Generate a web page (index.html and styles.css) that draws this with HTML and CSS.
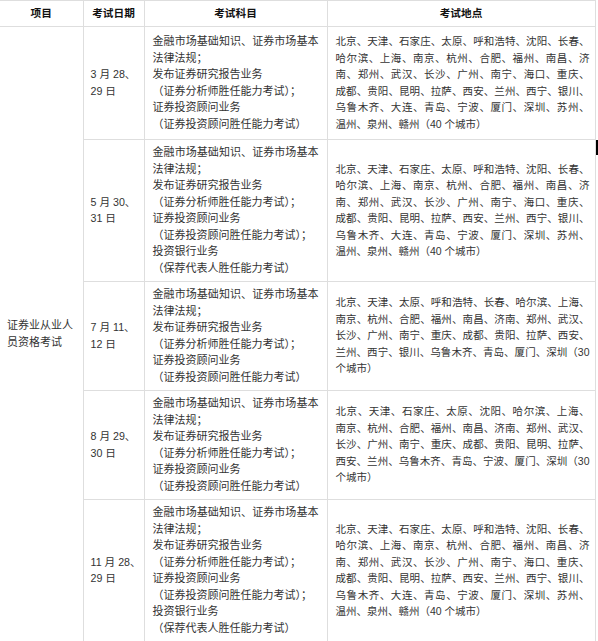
FILE: index.html
```html
<!DOCTYPE html>
<html lang="zh-CN">
<head>
<meta charset="utf-8">
<title>证券业从业人员资格考试</title>
<link rel="stylesheet" href="styles.css">
</head>
<body>
<table class="exam">
  <colgroup>
    <col class="c-item">
    <col class="c-date">
    <col class="c-subj">
    <col class="c-place">
  </colgroup>
  <thead>
    <tr>
      <th>项目</th>
      <th>考试日期</th>
      <th>考试科目</th>
      <th>考试地点</th>
    </tr>
  </thead>
  <tbody>
    <tr class="first">
      <td class="item" rowspan="5">证券业从业人员资格考试</td>
      <td class="date">3 月 28、29 日</td>
      <td class="subj">金融市场基础知识、证券市场基本法律法规；<br>发布证券研究报告业务<br>（证券分析师胜任能力考试）；<br>证券投资顾问业务<br>（证券投资顾问胜任能力考试）</td>
      <td class="place">北京、天津、石家庄、太原、呼和浩特、沈阳、长春、哈尔滨、上海、南京、杭州、合肥、福州、南昌、济南、郑州、武汉、长沙、广州、南宁、海口、重庆、成&#8288;都、贵阳、昆明、拉萨、西安、兰州、西宁、银川、乌鲁木齐、大连、青岛、宁波、厦门、深圳、苏州、温&#8288;州、泉州、赣州（40 个城市）</td>
    </tr>
    <tr>
      <td class="date">5 月 30、31 日</td>
      <td class="subj">金融市场基础知识、证券市场基本法律法规；<br>发布证券研究报告业务<br>（证券分析师胜任能力考试）；<br>证券投资顾问业务<br>（证券投资顾问胜任能力考试）；<br>投资银行业务<br>（保荐代表人胜任能力考试）</td>
      <td class="place">北京、天津、石家庄、太原、呼和浩特、沈阳、长春、哈尔滨、上海、南京、杭州、合肥、福州、南昌、济南、郑州、武汉、长沙、广州、南宁、海口、重庆、成&#8288;都、贵阳、昆明、拉萨、西安、兰州、西宁、银川、乌鲁木齐、大连、青岛、宁波、厦门、深圳、苏州、温&#8288;州、泉州、赣州（40 个城市）</td>
    </tr>
    <tr>
      <td class="date">7 月 11、12 日</td>
      <td class="subj">金融市场基础知识、证券市场基本法律法规；<br>发布证券研究报告业务<br>（证券分析师胜任能力考试）；<br>证券投资顾问业务<br>（证券投资顾问胜任能力考试）</td>
      <td class="place">北京、天津、太原、呼和浩特、长春、哈尔滨、上海、南京、杭州、合肥、福州、南昌、济南、郑州、武汉、长沙、广州、南宁、重庆、成都、贵阳、拉萨、西安、兰州、西宁、银川、乌鲁木齐、青岛、厦门、深圳（30 个城市）</td>
    </tr>
    <tr>
      <td class="date">8 月 29、30 日</td>
      <td class="subj">金融市场基础知识、证券市场基本法律法规；<br>发布证券研究报告业务<br>（证券分析师胜任能力考试）；<br>证券投资顾问业务<br>（证券投资顾问胜任能力考试）</td>
      <td class="place">北京、天津、石家庄、太原、沈阳、哈尔滨、上海、南&#8288;京、杭州、合肥、福州、南昌、济南、郑州、武汉、长沙、广州、南宁、重庆、成都、贵阳、昆明、拉萨、西安、兰州、乌鲁木齐、青岛、宁波、厦门、深圳（30 个城市）</td>
    </tr>
    <tr>
      <td class="date">11 月 28、29 日</td>
      <td class="subj">金融市场基础知识、证券市场基本法律法规；<br>发布证券研究报告业务<br>（证券分析师胜任能力考试）；<br>证券投资顾问业务<br>（证券投资顾问胜任能力考试）；<br>投资银行业务<br>（保荐代表人胜任能力考试）</td>
      <td class="place">北京、天津、石家庄、太原、呼和浩特、沈阳、长春、哈尔滨、上海、南京、杭州、合肥、福州、南昌、济南、郑州、武汉、长沙、广州、南宁、海口、重庆、成&#8288;都、贵阳、昆明、拉萨、西安、兰州、西宁、银川、乌鲁木齐、大连、青岛、宁波、厦门、深圳、苏州、温&#8288;州、泉州、赣州（40 个城市）</td>
    </tr>
  </tbody>
</table>
<div class="caret"></div>
</body>
</html>
```
FILE: styles.css
```css
html, body {
  margin: 0;
  padding: 0;
  background: #fff;
}

body {
  position: relative;
  font-family: "Liberation Sans", "Noto Sans CJK SC", sans-serif;
  font-size: 10.67px;
  line-height: 16.5px;
  color: #333;
}

.exam {
  width: 595px;
  table-layout: fixed;
  border-collapse: collapse;
  border-spacing: 0;
}

.c-item { width: 83px; }
.c-date { width: 61px; }
.c-subj { width: 183px; }
.c-place { width: 268px; }

.exam th,
.exam td {
  border: 1px solid #dedede;
  vertical-align: middle;
}

.exam th:first-child,
.exam td.item {
  border-left: none;
}

.exam th {
  font-weight: bold;
  color: #111;
  text-align: center;
  padding: 4px 4px;
}

.exam td {
  padding: 4.5px 5px 4.5px 8px;
  text-align: left;
}

.exam tr.first td {
  padding-top: 6.5px;
  padding-bottom: 6.5px;
}

.exam td.item {
  font-size: 11px;
  padding-left: 7px;
  padding-right: 8px;
}

.exam td.date {
  padding-left: 7px;
  padding-right: 1px;
}

.exam td.subj {
  font-size: 11px;
  text-align: justify;
  padding-right: 8px;
}

.exam td.place {
  font-size: 10.5px;
  text-align: justify;
}

.caret {
  position: absolute;
  left: 596px;
  top: 140px;
  width: 2px;
  height: 15px;
  background: #000;
}
```
